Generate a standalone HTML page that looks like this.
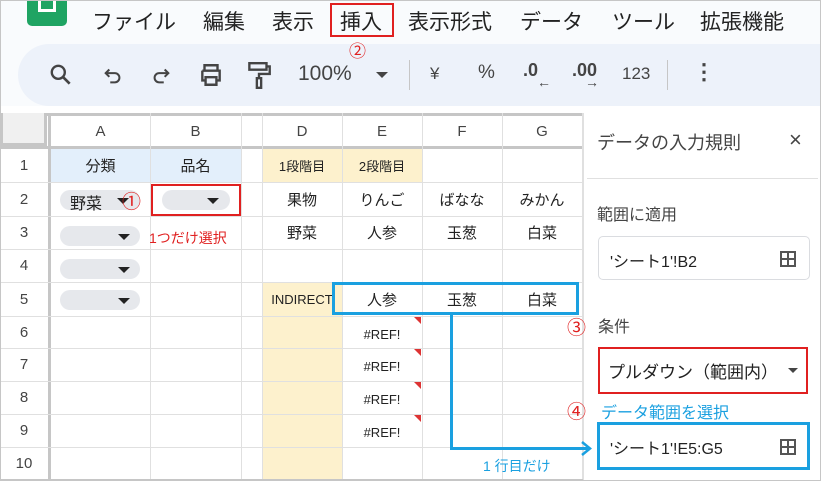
<!DOCTYPE html>
<html><head><meta charset="utf-8"><style>
*{margin:0;padding:0;box-sizing:border-box}
body{width:821px;height:481px;overflow:hidden;background:#fff;font-family:"Liberation Sans","Noto Sans CJK JP",sans-serif;position:relative;color:#222}
.a{position:absolute}
.c{position:absolute;display:flex;align-items:center;justify-content:center;font-size:15px}
.vl{position:absolute;width:1px;background:#e0e0e0}
.hl{position:absolute;height:1px;background:#e0e0e0}
.pill{position:absolute;height:20px;border-radius:10px;background:#e6e8ec}
.tri{position:absolute;width:0;height:0;border-left:6px solid transparent;border-right:6px solid transparent;border-top:6px solid #222}
.rn{color:#e02020;font-size:17px}
.tb{position:absolute;font-size:20px;color:#444;top:62px}
.m{position:absolute;top:6px;font-size:21px;color:#222;white-space:nowrap}
</style></head><body>
<div class="a" style="left:0;top:0;width:821px;height:481px;border:1px solid #c6c6c6;z-index:20;pointer-events:none"></div>
<!-- menu -->
<div class="a" style="left:0;top:0;width:821px;height:44px;background:#f9fbfd"></div>
<div class="a" style="left:27px;top:0;width:40px;height:26px;background:#1fa463;border-radius:0 0 5px 5px"></div>
<div class="a" style="left:38px;top:0;width:18px;height:12px;border:3px solid #fff;border-top:none"></div>
<div class="m" style="left:92px">ファイル</div>
<div class="m" style="left:203px">編集</div>
<div class="m" style="left:272px">表示</div>
<div class="m" style="left:340px">挿入</div>
<div class="m" style="left:408px">表示形式</div>
<div class="m" style="left:520px">データ</div>
<div class="m" style="left:612px">ツール</div>
<div class="m" style="left:700px">拡張機能</div>
<div class="a" style="left:330px;top:3px;width:64px;height:34px;border:2px solid #e02020"></div>
<!-- toolbar -->
<div class="a" style="left:0;top:44px;width:821px;height:62px;background:#f9fbfd"></div>
<div class="a" style="left:18px;top:44px;width:803px;height:62px;background:#edf2fa;border-radius:31px 0 0 31px"></div>
<div class="a rn" style="left:349px;top:37px;z-index:6">②</div>
<svg class="a" style="left:48px;top:62px" width="26" height="26" viewBox="0 0 24 24"><circle cx="9.5" cy="9.5" r="6" fill="none" stroke="#444" stroke-width="2.2"/><path d="M14 14l6 6" stroke="#444" stroke-width="2.5"/></svg>
<svg class="a" style="left:102px;top:64px" width="22" height="22" viewBox="0 0 24 24"><path d="M8 6L4 10l4 4M4 10h10a5 5 0 010 10H9" fill="none" stroke="#444" stroke-width="2.2"/></svg>
<svg class="a" style="left:150px;top:64px" width="22" height="22" viewBox="0 0 24 24"><path d="M16 6l4 4-4 4M20 10H10a5 5 0 000 10h5" fill="none" stroke="#444" stroke-width="2.2"/></svg>
<svg class="a" style="left:198px;top:62px" width="26" height="26" viewBox="0 0 24 24"><path d="M6 8V3h12v5M4 8h16v9h-3M7 17H4V8M7 14h10v7H7z" fill="none" stroke="#444" stroke-width="2.2"/></svg>
<svg class="a" style="left:246px;top:60px" width="26" height="30" viewBox="0 0 24 28"><path d="M3 3h16v6H3zM19 6h3v7h-10v4M10 17h4v9h-4z" fill="none" stroke="#444" stroke-width="2.2"/></svg>
<div class="tb" style="left:298px;font-size:21px">100%</div>
<div class="tri" style="left:376px;top:72px;border-top-color:#444"></div>
<div class="a" style="left:409px;top:60px;width:1px;height:30px;background:#c6c6c6"></div>
<div class="tb" style="left:430px;font-size:17px;top:64px">¥</div>
<div class="tb" style="left:478px;font-size:19px">%</div>
<div class="tb" style="left:523px;font-size:18px;font-weight:bold;top:60px">.0</div>
<div class="tb" style="left:537px;font-size:14px;top:74px;font-weight:bold">←</div>
<div class="tb" style="left:572px;font-size:18px;font-weight:bold;top:60px">.00</div>
<div class="tb" style="left:585px;font-size:14px;top:74px;font-weight:bold">→</div>
<div class="tb" style="left:622px;font-size:17px;top:64px">123</div>
<div class="a" style="left:667px;top:60px;width:1px;height:30px;background:#c6c6c6"></div>
<div class="tb" style="left:693px;font-size:22px;top:59px;font-weight:bold">⋮</div>
<div class="a" style="left:0;top:106px;width:821px;height:7px;background:#fff"></div>
<!-- grid -->
<div class="a" style="left:0;top:113px;width:583px;height:36px;background:#fff"></div>
<div class="a" style="left:0;top:113px;width:51px;height:368px;background:#fff"></div>
<div class="a" style="left:0;top:113px;width:583px;height:3px;background:#c6c6c6"></div>
<div class="a" style="left:0;top:113px;width:47px;height:33px;background:#f0f0f0;border:3px solid #c6c6c6;border-top:none"></div>
<div class="a" style="left:51px;top:149px;width:190px;height:33px;background:#e3effb"></div>
<div class="a" style="left:262px;top:149px;width:160px;height:33px;background:#fdf1cd"></div>
<div class="a" style="left:262px;top:282px;width:80px;height:198px;background:#fdf1cd"></div>
<div class="a" style="left:0;top:146px;width:583px;height:3px;background:#c6c6c6"></div>
<div class="a" style="left:48px;top:113px;width:3px;height:368px;background:#c6c6c6"></div>
<div class="vl" style="left:150px;top:113px;height:368px"></div>
<div class="vl" style="left:241px;top:113px;height:368px"></div>
<div class="vl" style="left:262px;top:113px;height:368px"></div>
<div class="vl" style="left:342px;top:113px;height:368px"></div>
<div class="vl" style="left:422px;top:113px;height:368px"></div>
<div class="vl" style="left:502px;top:113px;height:368px"></div>
<div class="vl" style="left:582px;top:113px;height:368px"></div>
<div class="hl" style="left:0;top:182px;width:583px"></div>
<div class="hl" style="left:0;top:216px;width:583px"></div>
<div class="hl" style="left:0;top:249px;width:583px"></div>
<div class="hl" style="left:0;top:282px;width:583px"></div>
<div class="hl" style="left:0;top:316px;width:583px"></div>
<div class="hl" style="left:0;top:348px;width:583px"></div>
<div class="hl" style="left:0;top:381px;width:583px"></div>
<div class="hl" style="left:0;top:414px;width:583px"></div>
<div class="hl" style="left:0;top:447px;width:583px"></div>
<div class="hl" style="left:0;top:479px;width:821px;height:2px;background:#c6c6c6"></div>
<!-- headers -->
<div class="c" style="left:51px;top:116px;width:99px;height:30px;color:#444">A</div>
<div class="c" style="left:150px;top:116px;width:91px;height:30px;color:#444">B</div>
<div class="c" style="left:262px;top:116px;width:80px;height:30px;color:#444">D</div>
<div class="c" style="left:342px;top:116px;width:80px;height:30px;color:#444">E</div>
<div class="c" style="left:422px;top:116px;width:80px;height:30px;color:#444">F</div>
<div class="c" style="left:502px;top:116px;width:80px;height:30px;color:#444">G</div>
<div class="c" style="left:0;top:149px;width:48px;height:33px;color:#444">1</div>
<div class="c" style="left:0;top:182px;width:48px;height:34px;color:#444">2</div>
<div class="c" style="left:0;top:216px;width:48px;height:33px;color:#444">3</div>
<div class="c" style="left:0;top:249px;width:48px;height:33px;color:#444">4</div>
<div class="c" style="left:0;top:282px;width:48px;height:34px;color:#444">5</div>
<div class="c" style="left:0;top:316px;width:48px;height:32px;color:#444">6</div>
<div class="c" style="left:0;top:348px;width:48px;height:33px;color:#444">7</div>
<div class="c" style="left:0;top:381px;width:48px;height:33px;color:#444">8</div>
<div class="c" style="left:0;top:414px;width:48px;height:33px;color:#444">9</div>
<div class="c" style="left:0;top:447px;width:48px;height:32px;color:#444">10</div>
<!-- cells -->
<div class="c" style="left:51px;top:149px;width:99px;height:33px">分類</div>
<div class="c" style="left:150px;top:149px;width:91px;height:33px">品名</div>
<div class="c" style="left:262px;top:149px;width:80px;height:33px;font-size:13px">1段階目</div>
<div class="c" style="left:342px;top:149px;width:80px;height:33px;font-size:13px">2段階目</div>
<div class="pill" style="left:60px;top:190px;width:80px"></div>
<div class="a" style="left:70px;top:190px;font-size:16px">野菜</div>
<div class="tri" style="left:117px;top:198px"></div>
<div class="a rn" style="left:122px;top:187px;font-size:19px">①</div>
<div class="pill" style="left:162px;top:190px;width:68px"></div>
<div class="tri" style="left:207px;top:198px"></div>
<div class="a" style="left:151px;top:184px;width:90px;height:32px;border:2px solid #e02020"></div>
<div class="pill" style="left:60px;top:226px;width:80px"></div><div class="tri" style="left:118px;top:234px"></div>
<div class="pill" style="left:60px;top:259px;width:80px"></div><div class="tri" style="left:118px;top:267px"></div>
<div class="pill" style="left:60px;top:290px;width:80px"></div><div class="tri" style="left:118px;top:298px"></div>
<div class="a" style="left:149px;top:228px;font-size:14px;color:#e02020">1つだけ選択</div>
<div class="c" style="left:262px;top:182px;width:80px;height:34px">果物</div>
<div class="c" style="left:342px;top:182px;width:80px;height:34px">りんご</div>
<div class="c" style="left:422px;top:182px;width:80px;height:34px">ばなな</div>
<div class="c" style="left:502px;top:182px;width:80px;height:34px">みかん</div>
<div class="c" style="left:262px;top:216px;width:80px;height:33px">野菜</div>
<div class="c" style="left:342px;top:216px;width:80px;height:33px">人参</div>
<div class="c" style="left:422px;top:216px;width:80px;height:33px">玉葱</div>
<div class="c" style="left:502px;top:216px;width:80px;height:33px">白菜</div>
<div class="c" style="left:262px;top:282px;width:80px;height:34px;font-size:13px">INDIRECT</div>
<div class="c" style="left:342px;top:282px;width:80px;height:34px">人参</div>
<div class="c" style="left:422px;top:282px;width:80px;height:34px">玉葱</div>
<div class="c" style="left:502px;top:282px;width:80px;height:34px">白菜</div>
<div class="c" style="left:342px;top:318px;width:80px;height:32px;font-size:13px">#REF!</div>
<div class="c" style="left:342px;top:350px;width:80px;height:33px;font-size:13px">#REF!</div>
<div class="c" style="left:342px;top:383px;width:80px;height:33px;font-size:13px">#REF!</div>
<div class="c" style="left:342px;top:416px;width:80px;height:33px;font-size:13px">#REF!</div>
<div class="a" style="left:414px;top:317px;border-left:7px solid transparent;border-top:7px solid #d33"></div>
<div class="a" style="left:414px;top:349px;border-left:7px solid transparent;border-top:7px solid #d33"></div>
<div class="a" style="left:414px;top:382px;border-left:7px solid transparent;border-top:7px solid #d33"></div>
<div class="a" style="left:414px;top:415px;border-left:7px solid transparent;border-top:7px solid #d33"></div>
<!-- blue annotations -->
<div class="a" style="left:332px;top:282px;width:247px;height:33px;border:3px solid #1aa0e0;z-index:5"></div>
<div class="a" style="left:450px;top:314px;width:3px;height:136px;background:#1aa0e0;z-index:5"></div>
<div class="a" style="left:450px;top:447px;width:140px;height:3px;background:#1aa0e0;z-index:5"></div>
<svg class="a" style="left:580px;top:441px;z-index:5" width="12" height="15"><path d="M2 1l8 6.5-8 6.5" fill="none" stroke="#1aa0e0" stroke-width="2.5"/></svg>
<div class="a" style="left:483px;top:456px;font-size:14px;color:#1aa0e0">1 行目だけ</div>
<!-- side panel -->
<div class="a" style="left:583px;top:113px;width:238px;height:368px;background:#fff;border-left:1px solid #e0e0e0"></div>
<div class="a" style="left:597px;top:129px;font-size:18px;color:#444">データの入力規則</div>
<div class="a" style="left:789px;top:127px;font-size:22px;color:#444">×</div>
<div class="hl" style="left:587px;top:178px;width:231px"></div>
<div class="a" style="left:597px;top:201px;font-size:16px;color:#444">範囲に適用</div>
<div class="a" style="left:598px;top:236px;width:212px;height:44px;border:1px solid #dadce0;border-radius:5px"></div>
<div class="a" style="left:610px;top:248px;font-size:16px">'シート1'!B2</div>
<svg class="a" style="left:778px;top:249px" width="20" height="20" viewBox="0 0 20 20"><path d="M2 2h16v16H2z" fill="#555"/><path d="M4 4h5v5H4zM11 4h5v5h-5zM4 11h5v5H4zM11 11h5v5h-5z" fill="#fff"/></svg>
<div class="a rn" style="left:567px;top:313px;font-size:19px">③</div>
<div class="a" style="left:598px;top:313px;font-size:16px;color:#444">条件</div>
<div class="a" style="left:598px;top:347px;width:210px;height:47px;border:2px solid #e02020"></div>
<div class="a" style="left:608px;top:358px;font-size:17px">プルダウン（範囲内）</div>
<div class="tri" style="left:788px;top:368px;border-left-width:5px;border-right-width:5px;border-top:5px solid #444"></div>
<div class="a rn" style="left:567px;top:397px;font-size:19px">④</div>
<div class="a" style="left:601px;top:399px;font-size:16px;color:#1aa0e0">データ範囲を選択</div>
<div class="a" style="left:597px;top:422px;width:213px;height:48px;border:3px solid #1aa0e0"></div>
<div class="a" style="left:610px;top:435px;font-size:16px">'シート1'!E5:G5</div>
<svg class="a" style="left:778px;top:437px" width="20" height="20" viewBox="0 0 20 20"><path d="M2 2h16v16H2z" fill="#555"/><path d="M4 4h5v5H4zM11 4h5v5h-5zM4 11h5v5H4zM11 11h5v5h-5z" fill="#fff"/></svg>
</body></html>
